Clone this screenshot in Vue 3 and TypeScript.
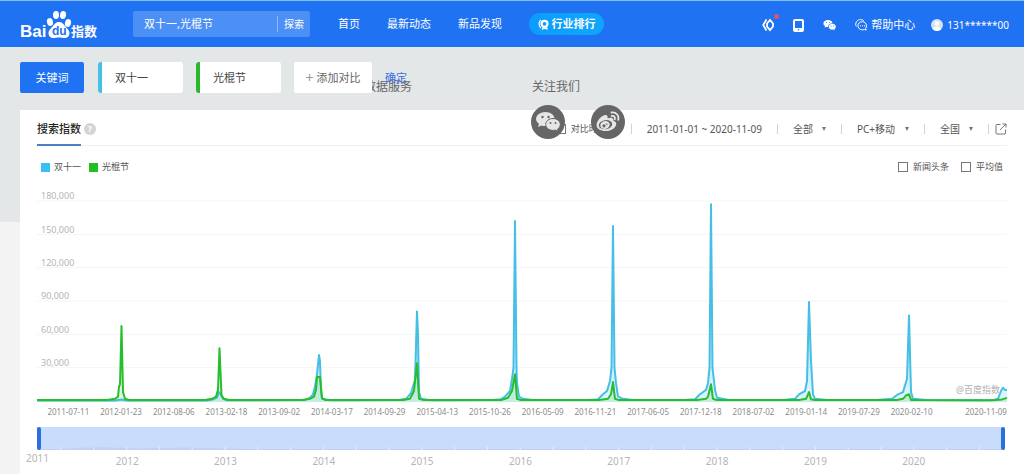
<script setup lang="ts">
import { ref } from 'vue'

type Point = [number, number]

const query = ref('双十一,光棍节')
const keywords = ref([
  { name: '双十一', tone: 'sky' },
  { name: '光棍节', tone: 'green' },
])
const rangeStart = ref(0)
const rangeEnd = ref(100)
const comparePeriod = ref(false)
const showNews = ref(false)
const showAverage = ref(false)

const nav = ['首页', '最新动态', '新品发现']
const filters = [
  { label: '地区设备', value: '全部', size: 'short' },
  { label: '终端', value: 'PC+移动', size: 'long' },
  { label: '地域', value: '全国', size: 'short' },
]
const yTicks = ['180,000', '150,000', '120,000', '90,000', '60,000', '30,000']
const dates = [
  '2011-07-11', '2012-01-23', '2012-08-06', '2013-02-18', '2013-09-02', '2014-03-17',
  '2014-09-29', '2015-04-13', '2015-10-26', '2016-05-09', '2016-11-21', '2017-06-05',
  '2017-12-18', '2018-07-02', '2019-01-14', '2019-07-29', '2020-02-10', '2020-11-09',
]
const years = [2011, 2012, 2013, 2014, 2015, 2016, 2017, 2018, 2019, 2020]
const sliderTicks = Array.from({ length: 29 }, (_, i) => 24 + i * 32.8)

// Horizontal plot position, index value in thousands
const sky: Point[] = [
  [0, 0.4], [78, 0.5], [84, 1.4], [90, 0.5],
  [170, 0.5], [176, 1.4], [180, 3], [182, 8], [184, 6], [186, 2], [190, 0.6],
  [268, 0.8], [273, 3], [276, 6], [278, 13], [280, 24], [282, 41.5], [283, 36], [284, 9], [285, 2], [292, 1], [296, 0.6],
  [362, 0.8], [369, 2], [374, 7], [376, 13], [378, 19], [380, 80.5], [381, 60], [382, 8], [384, 2], [392, 1], [396, 0.6],
  [456, 0.8], [464, 1.6], [468, 4], [473, 9], [475, 20], [476.5, 30], [478, 162], [479.5, 30], [480, 16], [482, 4], [486, 2], [496, 0.8],
  [553, 0.8], [561, 1.6], [566, 6], [570, 9], [573, 18], [574.5, 30], [576, 157.5], [577.5, 30], [579, 16], [581, 4], [586, 2], [596, 0.8],
  [648, 0.8], [658, 1.6], [663, 6], [669, 10], [671, 16], [672.5, 30], [674, 177], [675.5, 30], [677, 18], [678, 10], [680, 3], [692, 1],
  [746, 0.8], [758, 2], [762, 6], [768, 9], [770, 18], [772, 89], [774, 36], [776, 6], [778, 2], [790, 0.8],
  [840, 0.8], [855, 2], [861, 6], [866, 8], [870, 20], [872, 77], [874, 8], [876, 2], [890, 0.8],
  [945, 0.6], [957, 1], [961, 2], [964, 9], [966, 12], [968, 10], [970, 10],
]
const green: Point[] = [
  [0, 0.8], [70, 1], [78, 2], [81, 4], [82, 13], [83, 15], [84.5, 67.5], [86, 8], [88, 2], [92, 1],
  [168, 1], [175, 2], [179, 4], [181, 10], [182.5, 47.5], [184.5, 5], [187, 2], [192, 1],
  [265, 1], [273, 2], [277, 4], [279, 10], [280, 21.5], [283, 21.5], [285, 3], [288, 1],
  [366, 0.8], [373, 2], [377, 9], [380, 34], [382, 2], [386, 1],
  [464, 0.8], [471, 3], [475, 9], [478, 24], [480, 2], [484, 0.8],
  [562, 0.8], [571, 2], [574, 6], [576, 17], [578, 2], [582, 0.8],
  [660, 0.8], [669, 2], [671, 4], [674, 15], [676, 2], [680, 0.8],
  [762, 0.8], [769, 2], [772, 8], [774, 1.5], [778, 0.8],
  [860, 0.8], [866, 2], [869, 5], [872, 6], [874, 1], [880, 0.8],
  [955, 0.6], [965, 1.4], [970, 2.8],
]

const toY = (v: number) => (207 - (v * 200) / 180).toFixed(1)
const line = (points: Point[]) => points.map(([x, v]) => `${x},${toY(v)}`).join(' ')
const area = (points: Point[]) => `0,208 ${line(points)} 970,208`
const gridY = (i: number) => 7 + (i * 100) / 3
</script>

<template>
  <div class="page">
    <header class="top">
      <a href="#" class="logo" aria-label="百度指数">
        <svg width="78" height="30" viewBox="0 0 78 30" fill="#fff">
          <text x="0" y="28" font-size="17" class="logo-bai">Bai</text>
          <ellipse cx="30" cy="13" rx="3" ry="4" transform="rotate(-15 30 13)" />
          <ellipse cx="36" cy="6" rx="3" ry="4" />
          <ellipse cx="43" cy="6" rx="3" ry="4" transform="rotate(8 43 6)" />
          <ellipse cx="48" cy="14" rx="3" ry="4" transform="rotate(15 48 14)" />
          <path d="M39 13c3 0 4.500 2 6 4s4.500 4 4.500 7-2 5-5 5c-2 0-3-.5-5.500-.5s-3.500.5-5.500.5c-3 0-5-2-5-5s3-5 4.500-7 3-4 6-4z" />
          <text x="32" y="26" font-size="12" class="logo-du">du</text>
          <text x="51" y="27" font-size="13" class="logo-cn">指数</text>
        </svg>
      </a>
      <form class="search" @submit.prevent>
        <input v-model="query" type="text" aria-label="搜索关键词" />
        <button type="submit">探索</button>
      </form>
      <nav class="nav">
        <a v-for="item in nav" :key="item" href="#">{{ item }}</a>
        <a href="#" class="pill">
          <svg width="11" height="11" viewBox="0 0 11 11" fill="none" stroke="#fff">
            <circle cx="6.500" cy="4.800" r="3" stroke-width="2.200" />
            <path d="M5 8.500 4.500 10 6.500 9.300 9 10 8.500 8" stroke-width="1.200" />
            <path d="M2.800 1C.8 2.500.2 6 2.800 9" stroke-width="1.200" />
          </svg>
          行业排行
        </a>
      </nav>
      <div class="tools">
        <a href="#" class="badge-wrap" aria-label="开放平台">
          <svg width="12" height="14" viewBox="0 0 12 14" fill="none" stroke="#fff" stroke-width="1.800">
            <path d="M4.500 1.500 1.200 7l3.300 5.500M8 2 5 5.500v3L8 12l3-3.500v-3z" />
          </svg>
          <i class="dot"></i>
        </a>
        <a href="#" aria-label="移动版">
          <svg width="11" height="13" viewBox="0 0 11 13">
            <rect x="1" y="1" width="9" height="11" rx="1" fill="none" stroke="#fff" stroke-width="2" />
            <path d="M1 9h9v3H1z" fill="#fff" />
            <circle cx="5.500" cy="10.800" r=".8" fill="#1f72f2" />
          </svg>
        </a>
        <a href="#" aria-label="微信">
          <svg width="13" height="12" viewBox="0 0 13 12" fill="#fff">
            <path d="M5 1c2.500 0 4.500 1.500 4.500 3.200-2.800 0-4.700 1.600-4.400 3.900-.7 0-1.300-.1-1.800-.3L1.700 8.700l.4-1.600C1 6.500.4 5.500.4 4.500.4 2.500 2.500 1 5 1z" />
            <path d="M9.200 4.800c2 0 3.600 1.300 3.600 2.900 0 .9-.5 1.700-1.300 2.200l.3 1.300-1.400-.7c-2.600.6-4.700-.9-4.700-2.800 0-1.600 1.500-2.900 3.500-2.900z" />
            <g fill="#1f72f2"><circle cx="3.500" cy="3.500" r=".5" /><circle cx="6.300" cy="3.500" r=".5" /><circle cx="8" cy="7" r=".5" /><circle cx="10.400" cy="7" r=".5" /></g>
          </svg>
        </a>
        <a href="#" class="with-icon">
          <svg width="12" height="12" viewBox="0 0 12 12" fill="none" stroke="#fff" stroke-width="1">
            <path d="M9.500 10.500c-2.500 1-6 0-6.500-3-.5-3 1.800-4.800 4.300-4.800 2.400 0 4.200 1.800 4.200 4.100 0 1-.3 1.700-.8 2.400l.4 2z" />
            <path d="M1.500 7.500.8 6.500C.3 3 2.500.6 5.500.6c1.500 0 2.500.5 3.300 1.200" />
            <path d="M5 6.800h1M7 6.800h1M9 6.800h1" />
          </svg>
          帮助中心
        </a>
        <a href="#" class="with-icon">
          <svg width="12" height="12" viewBox="0 0 12 12">
            <circle cx="6" cy="6" r="6" fill="#d5e0f2" />
            <circle cx="6" cy="4.500" r="2.400" fill="#fff" />
            <path d="M1.800 10.200C2.500 8 4 7.300 6 7.300s3.500.7 4.200 2.900A6 6 0 0 1 1.800 10.200z" fill="#fff" />
          </svg>
          131******00
        </a>
      </div>
    </header>

    <span class="stray services">数据服务</span>
    <span class="stray follow">关注我们</span>

    <form class="terms" @submit.prevent>
      <button type="button" class="primary">关键词</button>
      <input
        v-for="(word, i) in keywords"
        :key="i"
        v-model="word.name"
        type="text"
        :class="['term', word.tone]"
        :aria-label="`关键词 ${i + 1}`"
      />
      <button type="button" class="add"><span>+</span>添加对比</button>
      <button type="submit" class="confirm">确定</button>
    </form>

    <main class="card">
      <div class="card-head">
        <h2>搜索指数</h2>
        <button type="button" class="help" aria-label="说明">?</button>
        <div class="filters">
          <label class="check"><input v-model="comparePeriod" type="checkbox" />对比时间段</label>
          <i class="bar"></i>
          <button type="button" class="period">2011-01-01 ~ 2020-11-09</button>
          <template v-for="f in filters" :key="f.label">
            <i class="bar"></i>
            <label class="picker">
              <select :aria-label="f.label" :class="f.size"><option>{{ f.value }}</option></select>
              <i class="arrow"></i>
            </label>
          </template>
          <span class="export">
            <i class="bar"></i>
            <button type="button" aria-label="导出">
              <svg width="12" height="12" viewBox="0 0 12 12" fill="none" stroke="#777">
                <path d="M5.500 1.500H2a1 1 0 0 0-1 1V10a1 1 0 0 0 1 1h7.500a1 1 0 0 0 1-1V6.500M7.500 1h3.500v3.500M11 1 5 7" />
              </svg>
            </button>
          </span>
        </div>
      </div>

      <div class="legend">
        <span class="key"><i class="sky-box"></i>双十一</span>
        <span class="key"><i class="green-box"></i>光棍节</span>
        <div class="options">
          <label class="check"><input v-model="showNews" type="checkbox" />新闻头条</label>
          <label class="check"><input v-model="showAverage" type="checkbox" />平均值</label>
        </div>
      </div>

      <div class="plot">
        <svg viewBox="0 0 970 210" preserveAspectRatio="none" role="img" aria-label="搜索指数趋势">
          <defs>
            <linearGradient id="skyFill" x1="0" y1="0" x2="0" y2="1">
              <stop offset="0" stop-color="#3ec0ee" stop-opacity=".8" />
              <stop offset="1" stop-color="#3ec0ee" stop-opacity=".15" />
            </linearGradient>
          </defs>
          <line v-for="i in 6" :key="i" x1="0" x2="970" :y1="gridY(i - 1)" :y2="gridY(i - 1)" class="grid-line" />
          <polygon :points="area(sky)" fill="url(#skyFill)" />
          <polyline :points="line(sky)" class="trace sky-line" />
          <polygon :points="area(green)" class="green-fill" />
          <polyline :points="line(green)" class="trace green-line" />
        </svg>
        <ul class="y-axis"><li v-for="t in yTicks" :key="t">{{ t }}</li></ul>
        <span class="mark">@百度指数</span>
      </div>

      <ul class="x-axis"><li v-for="d in dates" :key="d">{{ d }}</li></ul>

      <div class="slider">
        <svg viewBox="0 0 968 23" preserveAspectRatio="none" aria-hidden="true">
          <path d="M0 22.500H968" stroke="#c2cff0" />
          <path d="M20 22 60 20 100 21.500 150 20.500 210 22z" fill="#c3d3f2" />
          <path v-for="x in sliderTicks" :key="x" :d="`M${x} 20v3`" stroke="#e8effb" />
        </svg>
        <input v-model.number="rangeStart" type="range" min="0" max="100" aria-label="开始时间" />
        <input v-model.number="rangeEnd" type="range" min="0" max="100" aria-label="结束时间" />
      </div>
      <ul class="years"><li v-for="y in years" :key="y">{{ y }}</li></ul>
    </main>

    <div class="social">
      <a href="#" aria-label="微信">
        <svg width="34" height="34" viewBox="0 0 34 34">
          <circle cx="17" cy="17" r="17" fill="#666" />
          <path d="M14.500 7c5 0 9 3 9 6.500-5 0-9 3-8.500 7.500-1.500.2-3-.1-4.300-.5L7 22l1-3.200c-2-1.200-3-3-3-4.800C5 10 9.500 7 14.500 7z" fill="#e6e6e6" />
          <path d="M22 13.500c4 0 7.300 2.700 7.300 6 0 2-1 3.500-2.700 4.500l.6 2.500-2.700-1.400c-5.200 1.200-9.800-1.600-9.800-5.600 0-3.300 3.300-6 7.300-6z" fill="#e6e6e6" stroke="#666" />
          <g fill="#666"><circle cx="11.500" cy="12" r="1.200" /><circle cx="17.500" cy="12" r="1.200" /><circle cx="19.500" cy="18" r="1" /><circle cx="24.500" cy="18" r="1" /></g>
        </svg>
      </a>
      <a href="#" aria-label="微博">
        <svg width="34" height="34" viewBox="0 0 34 34">
          <circle cx="17" cy="17" r="17" fill="#666" />
          <path d="M14.500 10c2 0 2.500 1.500 2 3.500 3-1.300 6.500-1 5.800 2.200 2.500.8 3.500 2.300 2.700 4.500-1.300 3.800-6 5.800-10.500 5.800-5 0-9-2.300-9-6C5.500 16 11 10 14.500 10z" fill="#e6e6e6" />
          <ellipse cx="14.500" cy="19.700" rx="6.800" ry="4.600" fill="#666" transform="rotate(-8 14.500 19.700)" />
          <ellipse cx="14" cy="20" rx="4.800" ry="3.800" fill="#e6e6e6" transform="rotate(-15 14 20)" />
          <circle cx="13" cy="20.800" r="1.600" fill="#666" /><circle cx="15.800" cy="19.200" r=".8" fill="#666" />
          <path d="M20.500 7.500c4.500-.8 8 3 6.700 7.300M20.800 11c2.200-.4 3.700 1.200 3 3.300" fill="none" stroke="#e6e6e6" stroke-width="1.800" stroke-linecap="round" />
        </svg>
      </a>
    </div>
  </div>
</template>

<style>
body {
  background: #f3f3f3;
}
</style>

<style scoped>
.page {
  position: relative;
  display: flex;
  flex-direction: column;
  min-height: 100vh;
  background: linear-gradient(#e3e7e8 222px, #f3f3f3 222px);
  font-family: "Noto Sans", "Noto Sans CJK SC", sans-serif;
  font-size: 11px;
  line-height: 16px;
  color: #444;
  overflow: hidden;
}
.page *,
.page *::before {
  box-sizing: border-box;
}
a {
  color: inherit;
  text-decoration: none;
}
button,
input,
select {
  margin: 0;
  padding: 0;
  border: 0;
  background: none;
  font: inherit;
  color: inherit;
}
svg {
  display: block;
  flex: none;
  overflow: visible;
}
ul {
  margin: 0;
  padding: 0;
  list-style: none;
}
.top {
  display: flex;
  align-items: center;
  height: 47px;
  padding: 0 15px 0 20px;
  border-top: 1px solid #82bdf5;
  background: #1f72f2;
  color: #fff;
}
.logo {
  margin-right: 35px;
}
.logo-bai {
  font-family: "Liberation Sans", sans-serif;
  font-weight: 700;
}
.logo-du {
  font-family: "Liberation Sans", sans-serif;
  font-weight: 700;
  fill: #1f72f2;
}
.logo-cn {
  font-weight: 700;
}
.search {
  display: flex;
  align-items: center;
  width: 177px;
  height: 26px;
  margin-right: 28px;
  border-radius: 2px;
  background: #4c8ff5;
}
.search input {
  flex: 1;
  min-width: 0;
  padding-left: 11px;
}
.search button {
  width: 33px;
  height: 16px;
  border-left: 1px solid #8fbaf9;
  font-size: 10px;
}
.nav {
  display: flex;
  align-items: center;
  gap: 27px;
  white-space: nowrap;
}
.pill {
  display: flex;
  align-items: center;
  justify-content: center;
  gap: 3px;
  width: 75px;
  height: 22px;
  border-radius: 11px;
  background: linear-gradient(90deg, #0b9dfb, #0fa6fc);
  font-weight: 700;
}
.tools {
  display: flex;
  align-items: center;
  gap: 19px;
  margin-left: auto;
  padding-top: 2px;
  white-space: nowrap;
}
.badge-wrap {
  position: relative;
}
.dot {
  position: absolute;
  top: -4px;
  right: -5px;
  width: 5px;
  height: 5px;
  border-radius: 50%;
  background: #e0507a;
}
.with-icon {
  display: flex;
  align-items: center;
  gap: 4px;
}
.with-icon:last-child {
  margin-left: -3px;
  font-size: 10px;
}
.stray {
  position: absolute;
  top: 79px;
  font-size: 12px;
  color: #666;
}
.services {
  left: 364px;
}
.follow {
  left: 532px;
}
.terms {
  position: relative;
  display: flex;
  gap: 13px;
  height: 31px;
  margin: 15px 20px 17px;
}
.primary {
  width: 64px;
  margin-right: 1px;
  border-radius: 2px;
  background: #1f72f2;
  color: #fff;
}
.term {
  width: 85px;
  padding-left: 13px;
  border-left: 4px solid;
  border-radius: 3px;
  background: #fff;
}
.sky {
  border-color: #43c0e4;
}
.green {
  border-color: #2bb92b;
}
.add {
  display: flex;
  align-items: center;
  justify-content: center;
  gap: 3px;
  width: 78px;
  border-radius: 2px;
  background: #fff;
  color: #666;
}
.add span {
  font-size: 14px;
  color: #999;
}
.confirm {
  align-self: center;
  color: #3a6fe0;
}
.card {
  flex: 1;
  margin-left: 20px;
  padding: 0 17px;
  background: #fff;
}
.card-head {
  display: flex;
  align-items: center;
  height: 36px;
  border-bottom: 1px solid #f0f0f0;
}
h2 {
  margin: 0 3px -1px 0;
  padding: 3px 0 0;
  border-bottom: 2px solid #4a80c4;
  height: 36px;
  font-size: 11px;
  font-weight: 500;
  line-height: 32px;
  color: #222;
}
.help {
  width: 12px;
  height: 12px;
  margin-top: 2px;
  border-radius: 50%;
  background: #d4d4d4;
  color: #fff;
  font-size: 9px;
  font-weight: 700;
  line-height: 12px;
}
.filters {
  display: flex;
  align-items: center;
  gap: 15px;
  margin-left: auto;
  padding-top: 2px;
  font-size: 10px;
  color: #555;
  white-space: nowrap;
}
.bar {
  width: 1px;
  height: 10px;
  background: #d2d2d2;
}
.check {
  display: flex;
  align-items: center;
  gap: 5px;
  font-size: 9px;
  color: #555;
}
.check input {
  appearance: none;
  width: 10px;
  height: 10px;
  border: 1px solid #777;
}
.picker {
  display: flex;
  align-items: center;
  gap: 9px;
}
select {
  appearance: none;
}
.short {
  width: 20px;
}
.long {
  width: 39px;
}
.arrow {
  border: 2px solid transparent;
  border-top: 4px solid #777;
  border-bottom: 0;
}
.export {
  display: flex;
  align-items: center;
  gap: 6px;
}
.legend {
  display: flex;
  align-items: center;
  gap: 8px;
  padding: 13px 4px 0;
  font-size: 9px;
  color: #555;
}
.key {
  display: flex;
  align-items: center;
  gap: 4px;
}
.key i {
  width: 9px;
  height: 9px;
}
.sky-box {
  background: #38bff3;
}
.green-box {
  background: #20c020;
}
.options {
  display: flex;
  gap: 12px;
  margin-left: auto;
}
.plot {
  position: relative;
  margin-top: 19px;
}
.plot svg {
  width: 100%;
  height: 210px;
}
.grid-line {
  stroke: #f3f5f5;
  vector-effect: non-scaling-stroke;
}
.trace {
  fill: none;
  stroke-width: 2;
  stroke-linejoin: round;
  vector-effect: non-scaling-stroke;
}
.sky-line {
  stroke: #45bfe6;
}
.green-line {
  stroke: #27bd2c;
}
.green-fill {
  fill: #27bd2c;
  fill-opacity: 0.15;
}
.y-axis {
  position: absolute;
  top: -26px;
  left: 4px;
  display: grid;
  grid-template-rows: repeat(6, 1fr);
  align-items: end;
  height: 200px;
  font-size: 9px;
  line-height: 10px;
  color: #b5b5b5;
}
.mark {
  position: absolute;
  right: 7px;
  bottom: 6px;
  font-size: 9px;
  color: #b0b0b0;
}
.x-axis {
  display: flex;
  padding-left: 5px;
  font-size: 8px;
  color: #8c8c8c;
}
.x-axis li {
  flex: 1;
  text-align: center;
  white-space: nowrap;
}
.x-axis li:last-child {
  flex: 0 0 69px;
  text-align: right;
}
.slider {
  display: grid;
  height: 23px;
  margin: 7px 2px 0 0;
  background: #c8dcfb;
}
.slider > * {
  grid-area: 1 / 1;
  width: 100%;
  height: 23px;
}
.slider input {
  appearance: none;
  pointer-events: none;
}
.slider input::-webkit-slider-thumb {
  appearance: none;
  width: 4px;
  height: 23px;
  border-radius: 2px;
  background: #2a6fdf;
  pointer-events: auto;
  cursor: ew-resize;
}
.years {
  display: flex;
  margin-left: -11px;
  padding-right: 44px;
  font-size: 10px;
  color: #b5b5b5;
}
.years li {
  flex: 1;
  padding-top: 3px;
  text-align: center;
}
.years li:first-child {
  flex: 0 0 52px;
  padding-top: 0;
  text-align: left;
}
.social {
  position: absolute;
  top: 105px;
  left: 531px;
  display: flex;
  gap: 26px;
}
</style>
